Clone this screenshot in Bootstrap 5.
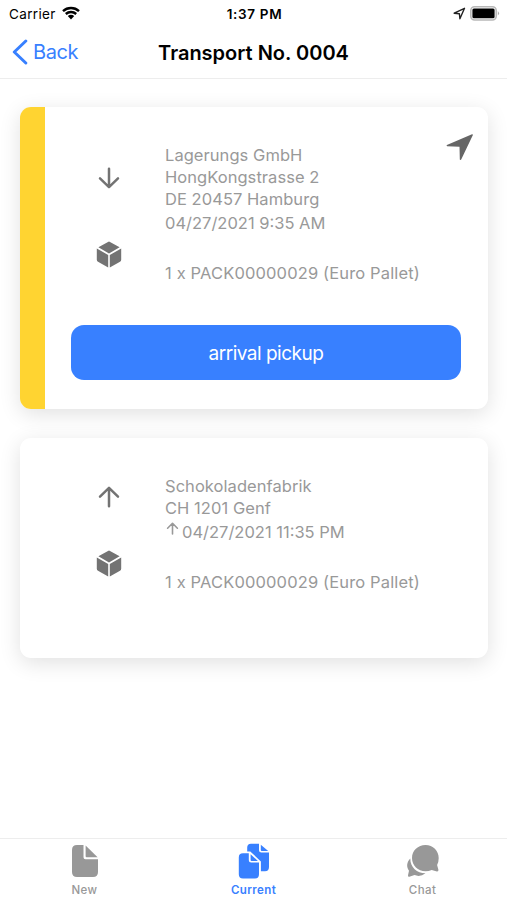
<!DOCTYPE html>
<html lang="en">
<head>
<meta charset="utf-8">
<meta name="viewport" content="width=device-width, initial-scale=1">
<title>Transport No. 0004</title>
<link href="https://cdn.jsdelivr.net/npm/bootstrap@5.3.0/dist/css/bootstrap.min.css" rel="stylesheet">
<style>
:root { --accent: #3880ff; --ink: #737373; --copy: #999; }
body { font-family: Inter, "Liberation Sans", sans-serif; height: 900px; overflow: hidden; color: #000; }
svg { display: block; flex: none; }
.status { height: 26px; font-size: 13.5px; line-height: 26px; padding: 1px 7px 0 9px; }
.carrier { letter-spacing: .35px; }
.clock { letter-spacing: .65px; }
.titlebar { height: 53px; border-bottom: 1px solid #ededed; padding: 0 12px; }
.side { flex: 1 1 0; }
.back { color: var(--accent); font-size: 20px; letter-spacing: -.4px; gap: 5px; }
.title { font-size: 20px; font-weight: 600; letter-spacing: 0; padding-top: 1px; }
.stops { padding: 28px 19px 0 20px; gap: 29px; }
.stop { border: 0; border-radius: 11px; box-shadow: 0 5px 21px rgba(0,0,0,.12); overflow: hidden; }
.pickup { height: 302px; }
.delivery { height: 220px; }
.marker { width: 25px; background: #ffd431; }
.symbols { width: 26px; }
.copy { color: var(--copy); font-size: 16.5px; line-height: 22px; letter-spacing: .05px; margin-left: 43px; white-space: nowrap; }
.when { letter-spacing: 0; }
.goods { letter-spacing: .14px; margin-top: 28px; }
.arrive { height: 55px; border-radius: 13px; background: var(--accent); border: 0; font-size: 19px; letter-spacing: -.5px; }
.tabs { height: 62px; border-top: 1px solid #ededed; }
.tab { color: #989898; font-size: 11.5px; font-weight: 500; line-height: 14px; padding-top: 4px; letter-spacing: .4px; }
.tab.active { color: var(--accent); font-weight: 600; }
</style>
<script src="https://cdn.jsdelivr.net/npm/bootstrap@5.3.0/dist/js/bootstrap.bundle.min.js"></script>
</head>
<body class="d-flex flex-column bg-white">
<svg width="0" height="0" class="position-absolute" aria-hidden="true">
  <symbol id="cube" viewBox="0 0 26 28">
    <path d="M12 .9a2 2 0 0 1 2 0l9.6 5.4L13 12.4 2.4 6.3z"/>
    <path d="M.8 7.5 12.2 14v12.6L2 20.7a2.4 2.4 0 0 1-1.2-2z"/>
    <path d="M25.2 7.5 13.8 14v12.6L24 20.7a2.4 2.4 0 0 0 1.2-2z"/>
  </symbol>
  <symbol id="arrow" viewBox="0 0 22 22">
    <path d="M11 20.2V2M2 10.6l9-8.8 9 8.8" fill="none" stroke="currentColor" stroke-width="2.5" stroke-linecap="round" stroke-linejoin="round"/>
  </symbol>
</svg>

<div class="status d-flex align-items-center">
  <div class="side d-flex align-items-center"><span class="carrier">Carrier</span>
    <svg width="18" height="14" viewBox="0 0 18 14" style="margin:-2px 0 0 6px"><path d="M1 5.1a11.7 11.7 0 0 1 16 0M3.8 8a7.7 7.7 0 0 1 10.4 0" fill="none" stroke="#000" stroke-width="2.4"/><path d="M5.8 10.1a4.8 4.8 0 0 1 6.4 0L9 13.6z"/></svg>
  </div>
  <div class="clock fw-semibold">1:37 PM</div>
  <div class="side d-flex align-items-center justify-content-end gap-1">
    <svg width="13" height="13" viewBox="0 0 13 13"><path d="M1.2 6.2 11.5 1.3 6.9 11.8 6.4 6.7z" fill="none" stroke="#222" stroke-width="1.4" stroke-linejoin="round"/></svg>
    <svg width="30" height="15" viewBox="0 0 30 15" style="margin-top:-1px"><rect x=".8" y=".8" width="25.4" height="13.2" rx="3.8" fill="#fff" stroke="#b8b8b8" stroke-width="1.6"/><rect x="2.4" y="2.6" width="22.2" height="9.6" rx="1.5"/><path d="M27.8 5q2.4 2.3 0 4.6z" fill="#aaa"/></svg>
  </div>
</div>
<header class="titlebar d-flex align-items-center">
  <div class="side d-flex"><a class="back d-flex align-items-center text-decoration-none" href="#">
    <svg width="16" height="26" viewBox="0 0 16 26"><path d="M13.8 2 2.3 13l11.5 11" fill="none" stroke="currentColor" stroke-width="3" stroke-linecap="round" stroke-linejoin="round"/></svg><span>Back</span></a></div>
  <h1 class="title m-0">Transport No. 0004</h1>
  <div class="side"></div>
</header>

<main class="stops flex-grow-1 d-flex flex-column">
  <section class="stop pickup card flex-row">
    <div class="marker"></div>
    <div class="flex-grow-1 d-flex flex-column" style="padding:37px 27px 0 26px">
      <div class="d-flex" style="height:181px;padding-left:25px">
        <div class="symbols d-flex flex-column align-items-center" style="padding-top:23px;color:var(--ink)">
          <svg width="22" height="22" style="transform:rotate(180deg)"><use href="#arrow"/></svg>
          <svg width="26" height="28" fill="currentColor" style="margin-top:52px"><use href="#cube"/></svg>
        </div>
        <div class="copy">
          <div>Lagerungs GmbH</div><div>HongKongstrasse 2</div><div>DE 20457 Hamburg</div>
          <div class="when" style="margin-top:2px">04/27/2021 9:35 AM</div>
          <div class="goods">1 x PACK00000029 (Euro Pallet)</div>
        </div>
        <svg class="ms-auto" width="28" height="28" viewBox="0 0 28 28" style="margin:-11px -13px 0 auto"><path d="M26 1.2.9 12q-.8.8.2 1.3l12.4.5.3 12.6q.6 1.1 1.4.1L26.9 2q0-1-.9-.8z" fill="#666"/></svg>
      </div>
      <button class="arrive btn btn-primary w-100 px-0 pb-0 pt-1" type="button">arrival pickup</button>
    </div>
  </section>
  <section class="stop delivery card flex-row" style="padding:37px 27px 0 76px">
    <div class="symbols d-flex flex-column align-items-center" style="padding-top:11px;color:var(--ink)">
      <svg width="22" height="22"><use href="#arrow"/></svg>
      <svg width="26" height="28" fill="currentColor" style="margin-top:42px"><use href="#cube"/></svg>
    </div>
    <div class="copy">
      <div>Schokoladenfabrik</div><div>CH 1201 Genf</div>
      <div class="when d-flex" style="margin-top:2px"><svg width="13" height="13" viewBox="0 0 13 13" style="margin:1px 3px 0 1px"><path d="M6.5 12V1.5M1.6 6.2l4.9-4.9 4.9 4.9" fill="none" stroke="currentColor" stroke-width="1.6" stroke-linecap="round" stroke-linejoin="round"/></svg><span>04/27/2021 11:35 PM</span></div>
      <div class="goods">1 x PACK00000029 (Euro Pallet)</div>
    </div>
  </section>
</main>

<nav class="tabs d-flex">
  <a class="tab side d-flex flex-column align-items-center text-decoration-none" href="#">
    <svg width="28" height="36" viewBox="0 0 28 36" fill="currentColor"><path d="M6 2h6.5v12.2q0 2 2 2H27V29q0 5-5 5H6q-5 0-5-5V7q0-5 5-5z"/><path d="M14.6 2.4 26.6 14.2H15.6q-1 0-1-1z"/></svg>
    <span style="margin-top:4px">New</span></a>
  <a class="tab active side d-flex flex-column align-items-center text-decoration-none" href="#">
    <svg width="32" height="36" viewBox="0 0 32 36" fill="currentColor"><path d="M13 .8h8v6.4q0 2.4 2.4 2.4H31V24q0 4.2-4 4.2h-4.1V18.5L12.3 8.4H9.2V4.6Q9.2.8 13 .8z"/><path d="M22.8 1.8 30.2 8h-6.4q-1 0-1-1z"/><path d="M5 10.2h5.8v7q0 2.4 2.4 2.4h7.8V31.3q0 4.2-4 4.2H5q-4.2 0-4.2-4.2V14.4q0-4.2 4.2-4.2z"/><path d="M12.6 11.2l7.3 6.7h-6.3q-1 0-1-1z"/></svg>
    <span style="margin-top:4px">Current</span></a>
  <a class="tab side d-flex flex-column align-items-center text-decoration-none" href="#">
    <svg width="34" height="36" viewBox="0 0 34 36" fill="currentColor"><path d="M19.5 2C27 2 32.7 7.8 32.7 15q0 4-1.6 7l1.3 4.7q.3 1.9-1.5 1.7l-5.2-1.5q-2.9 1.4-6.2 1.4C12 28.3 6 22.5 6 15S12 2 19.5 2z"/><path d="M4.3 15.5C4.2 24.2 11 30.3 19.5 30.3q-5.2 4-11 1.8l-5.2 1.7q-1.5.2-1.3-1.5l1-4.5C.4 24 .4 19.5 4.3 15.5z"/></svg>
    <span style="margin-top:4px">Chat</span></a>
</nav>
</body>
</html>
